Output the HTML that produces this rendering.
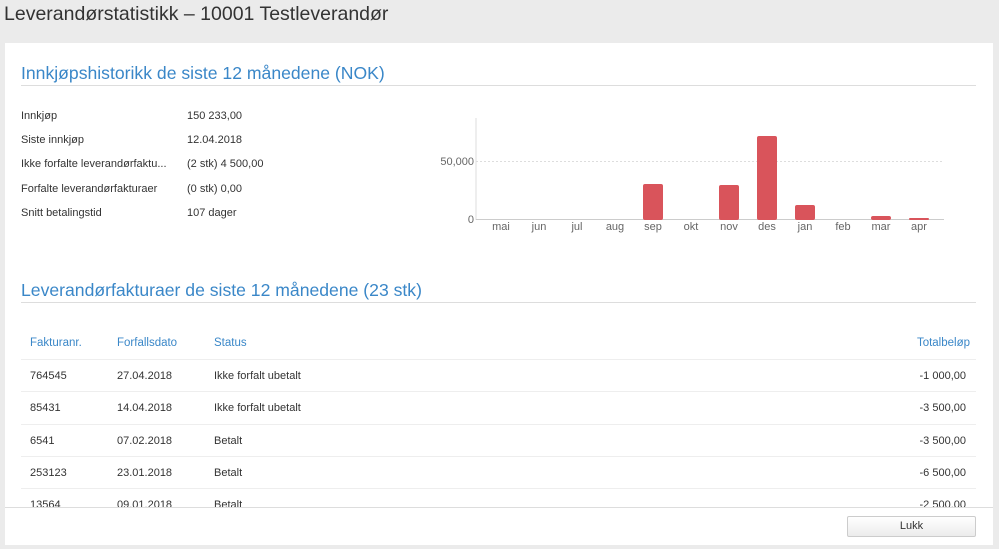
<!DOCTYPE html>
<html><head><meta charset="utf-8"><style>
*{margin:0;padding:0;box-sizing:border-box}
body{width:999px;height:549px;background:#ebebeb;font-family:"Liberation Sans",sans-serif;position:relative;overflow:hidden;color:#333}
.t{position:absolute;white-space:nowrap}
h1{position:absolute;left:4px;top:3px;font-weight:normal;font-size:19.5px;color:#333}
.panel{position:absolute;left:5px;top:43px;width:988px;height:502px;background:#fff;overflow:hidden}
h2{position:absolute;left:16px;font-weight:normal;font-size:17.6px;color:#3a87c8;white-space:nowrap}
.rule{position:absolute;left:16px;width:955px;height:1px;background:#ddd}
.s{font-size:11px;color:#333}
.th{font-size:11.5px;color:#3a87c8}
.foot{position:absolute;left:0;top:464px;width:988px;height:38px;background:#fff;border-top:1px solid #ddd}
.btn{position:absolute;left:842px;top:8px;width:129px;height:21px;border:1px solid #ccc;border-radius:2px;background:linear-gradient(#fff,#ececec);font-size:11px;text-align:center;line-height:19px;color:#333}
</style></head><body>
<h1>Leverandørstatistikk – 10001 Testleverandør</h1>
<div class="panel">
<h2 style="top:20px">Innkjøpshistorikk de siste 12 månedene (NOK)</h2>
<div class="rule" style="top:42px"></div>
<div class="t s" style="left:16px;top:67px">Innkjøp</div><div class="t s" style="left:182px;top:67px">150 233,00</div>
<div class="t s" style="left:16px;top:91px">Siste innkjøp</div><div class="t s" style="left:182px;top:91px">12.04.2018</div>
<div class="t s" style="left:16px;top:115px">Ikke forfalte leverandørfaktu...</div><div class="t s" style="left:182px;top:115px">(2 stk) 4 500,00</div>
<div class="t s" style="left:16px;top:140px">Forfalte leverandørfakturaer</div><div class="t s" style="left:182px;top:140px">(0 stk) 0,00</div>
<div class="t s" style="left:16px;top:164px">Snitt betalingstid</div><div class="t s" style="left:182px;top:164px">107 dager</div>
<svg style="position:absolute;left:0;top:0" width="988" height="200">
<g transform="translate(-5,-43)">
<line x1="476" y1="118" x2="476" y2="220" stroke="#ddd"/>
<line x1="476" y1="161.5" x2="944" y2="161.5" stroke="#ddd" stroke-dasharray="2,2"/>
<line x1="476" y1="219.5" x2="944" y2="219.5" stroke="#ccc"/>
<g fill="#d9545b">
<rect x="643" y="184" width="20" height="36" rx="2"/>
<rect x="719" y="185" width="20" height="35" rx="2"/>
<rect x="757" y="136" width="20" height="84" rx="2"/>
<rect x="795" y="205" width="20" height="15" rx="2"/>
<rect x="871" y="216" width="20" height="4" rx="2"/>
<rect x="909" y="218" width="20" height="2" rx="1"/>
</g>
<g font-family="Liberation Sans,sans-serif" font-size="11" fill="#666" text-anchor="middle">
<text x="501" y="230">mai</text><text x="539" y="230">jun</text><text x="577" y="230">jul</text><text x="615" y="230">aug</text><text x="653" y="230">sep</text><text x="691" y="230">okt</text><text x="729" y="230">nov</text><text x="767" y="230">des</text><text x="805" y="230">jan</text><text x="843" y="230">feb</text><text x="881" y="230">mar</text><text x="919" y="230">apr</text>
<text x="474" y="165" text-anchor="end">50,000</text><text x="474" y="223" text-anchor="end">0</text>
</g></g></svg>
<h2 style="top:237px">Leverandørfakturaer de siste 12 månedene (23 stk)</h2>
<div class="rule" style="top:259px"></div>
<div class="t th" style="left:25px;top:294px">Fakturanr.</div><div class="t th" style="left:112px;top:294px">Forfallsdato</div><div class="t th" style="left:209px;top:294px">Status</div><div class="t th" style="right:23px;top:294px">Totalbeløp</div>
<div class="rule" style="top:316px;background:#eee"></div>
<div class="t s" style="left:25px;top:327px">764545</div><div class="t s" style="left:112px;top:327px">27.04.2018</div><div class="t s" style="left:209px;top:327px">Ikke forfalt ubetalt</div><div class="t s" style="right:27px;top:327px">-1 000,00</div>
<div class="rule" style="top:348px;background:#eee"></div>
<div class="t s" style="left:25px;top:359px">85431</div><div class="t s" style="left:112px;top:359px">14.04.2018</div><div class="t s" style="left:209px;top:359px">Ikke forfalt ubetalt</div><div class="t s" style="right:27px;top:359px">-3 500,00</div>
<div class="rule" style="top:381px;background:#eee"></div>
<div class="t s" style="left:25px;top:392px">6541</div><div class="t s" style="left:112px;top:392px">07.02.2018</div><div class="t s" style="left:209px;top:392px">Betalt</div><div class="t s" style="right:27px;top:392px">-3 500,00</div>
<div class="rule" style="top:413px;background:#eee"></div>
<div class="t s" style="left:25px;top:424px">253123</div><div class="t s" style="left:112px;top:424px">23.01.2018</div><div class="t s" style="left:209px;top:424px">Betalt</div><div class="t s" style="right:27px;top:424px">-6 500,00</div>
<div class="rule" style="top:445px;background:#eee"></div>
<div class="t s" style="left:25px;top:456px">13564</div><div class="t s" style="left:112px;top:456px">09.01.2018</div><div class="t s" style="left:209px;top:456px">Betalt</div><div class="t s" style="right:27px;top:456px">-2 500,00</div>
<div class="foot"><div class="btn">Lukk</div></div>
</div>
</body></html>
